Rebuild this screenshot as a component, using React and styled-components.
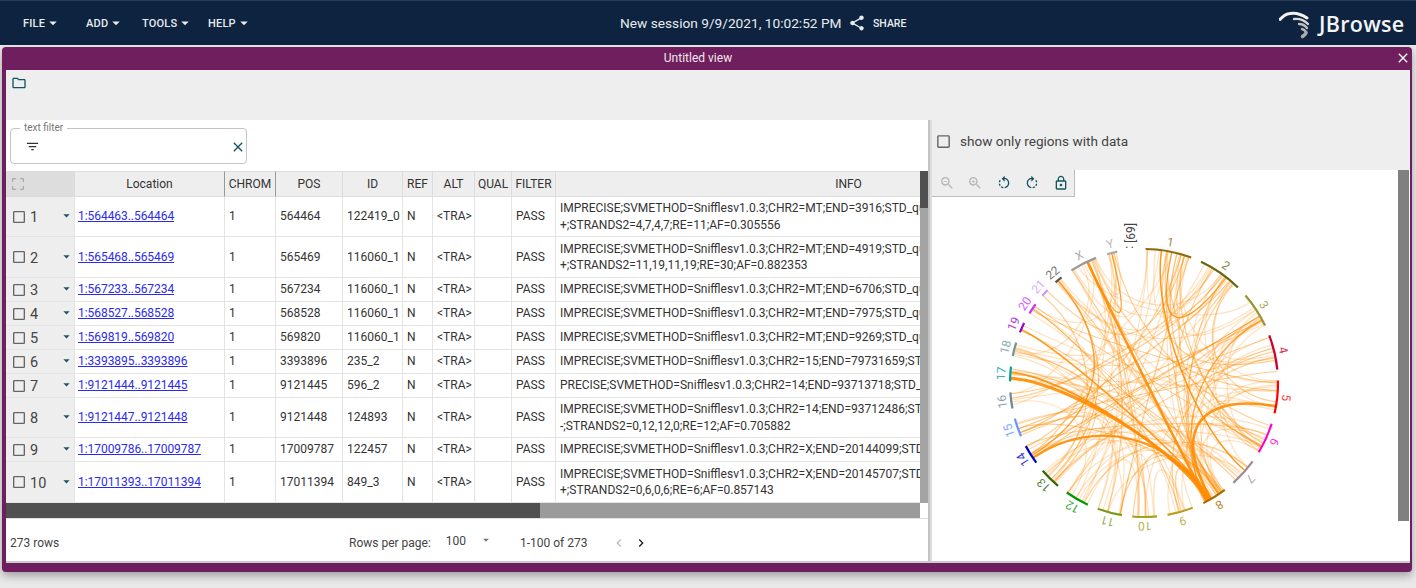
import styled, { createGlobalStyle } from 'styled-components'
import {
  MdArrowDropDown, MdCheckBoxOutlineBlank, MdChevronLeft, MdChevronRight, MdClear, MdClose,
  MdCropFree, MdFilterList, MdLockOutline, MdOutlineFolder, MdRotateLeft, MdRotateRight,
  MdShare, MdZoomIn, MdZoomOut,
} from 'react-icons/md'

const GlobalStyle = createGlobalStyle`
  html, body { margin: 0; padding: 0; background: #e9e9e9; }
  body { font-family: Roboto, "Liberation Sans", sans-serif; color: #333; overflow: hidden; }
`

const Page = styled.div`
  width: 1416px;
  height: 588px;
  overflow: hidden;
`

const TopBar = styled.header`
  height: 44px;
  border-top: 1px solid #2a3d58;
  background: #0d233f;
  color: #e8ebef;
  display: flex;
  align-items: center;
`

const Menu = styled.nav`
  width: 620px;
  padding-left: 23px;
  box-sizing: border-box;
  display: flex;
`

const MenuButton = styled.div`
  width: ${p => p.$w}px;
  display: flex;
  align-items: center;
  font-size: 11px;
  font-weight: 500;
  letter-spacing: 0.2px;
  svg { font-size: 18px; margin-left: -1px; }
`

const SessionName = styled.div`
  font-size: 13.7px;
  width: 228px;
  white-space: nowrap;
`

const ShareButton = styled.div`
  display: flex;
  align-items: center;
  gap: 7px;
  font-size: 10.5px;
  font-weight: 500;
  svg { font-size: 18px; }
`

const Logo = styled.div`
  margin-left: auto;
  width: 137px;
  display: flex;
  align-items: center;
  font-family: "Open Sans", sans-serif;
  font-size: 21.5px;
  font-weight: 600;
  letter-spacing: 0.3px;
  color: #f4f4f4;
`

const Panel = styled.section`
  margin: 2px 4px 0 2px;
  height: 525px;
  box-sizing: border-box;
  padding: 0 2px 9px 4px;
  background: #701f5e;
  border-radius: 4px;
  box-shadow: 0 4px 8px rgba(0, 0, 0, 0.3);
  display: flex;
  flex-direction: column;
`

const TitleBar = styled.div`
  height: 22px;
  flex: none;
  display: flex;
  align-items: center;
  justify-content: center;
  position: relative;
  color: #f0e6ee;
  font-size: 12px;
  padding-right: 16px;
  margin-left: -4px;
`

const CloseIcon = styled(MdClose)`
  position: absolute;
  right: -1px;
  top: 3px;
  font-size: 16px;
  color: #fff;
`

const ViewToolbar = styled.div`
  height: 50px;
  margin-top: 1px;
  flex: none;
  background: #eeeeee;
  padding: 5px;
  box-sizing: border-box;
  color: #135560;
  font-size: 16px;
`

const Split = styled.div`
  flex: 1;
  min-height: 0;
  display: flex;
  background: #fff;
  border-bottom: 2px solid #ccc;
`

const LeftColumn = styled.div`
  width: 922px;
  flex: none;
  display: flex;
  flex-direction: column;
`

const Divider = styled.div`
  width: 4px;
  flex: none;
  background: linear-gradient(to right, #c4c4c4 0, #c4c4c4 2px, #dddddd 2px);
`

const RightColumn = styled.div`
  flex: 1;
  display: flex;
  flex-direction: column;
`

const FilterBar = styled.div`
  height: 51px;
  flex: none;
  padding: 3px 0 0 4px;
  box-sizing: border-box;
`

const FilterBox = styled.fieldset`
  width: 237px;
  height: 41px;
  box-sizing: border-box;
  margin: 0;
  padding: 0 0 0 14px;
  border: 1px solid #c4c4c4;
  border-radius: 4px;
  display: flex;
  align-items: center;
  justify-content: space-between;
  legend {
    font-size: 10px;
    line-height: 10px;
    color: #777;
    padding: 0 4px;
    margin-left: -5px;
  }
  svg { font-size: 15px; color: #333; margin-top: -3px; }
  svg + svg { font-size: 16px; color: #135560; }
`

const TableRow = styled.div`
  display: flex;
  height: 332px;
  flex: none;
`

const TableClip = styled.div`
  width: 914px;
  overflow: hidden;
`

const Grid = styled.table`
  width: 1136px;
  table-layout: fixed;
  border-collapse: separate;
  border-spacing: 0;
  font-size: 12px;
  color: #333;
`

const HeadCell = styled.th`
  height: 26px;
  padding: 0;
  box-sizing: border-box;
  background: ${p => (p.$corner ? '#dddddd' : '#eeeeee')};
  border-right: ${p => (p.$strong ? '1.5px solid #999' : '1px solid #dcdcdc')};
  border-bottom: 1px solid #dcdcdc;
  border-top: 1px solid #dcdcdc;
  font-weight: 400;
  font-size: 12px;
  color: #333;
  text-align: center;
  overflow: hidden;
  white-space: nowrap;
  svg { display: block; margin-left: 4px; font-size: 16px; color: #aaa; }
`

const Cell = styled.td`
  height: ${p => p.$h}px;
  box-sizing: border-box;
  padding: 0 4px;
  border-right: 1px solid #e4e4e4;
  border-bottom: 1px solid #e4e4e4;
  white-space: nowrap;
  overflow: hidden;
  line-height: 16.5px;
`

const RowHead = styled(Cell)`
  background: #eeeeee;
  padding: 0;
`

const RowHeadInner = styled.div`
  display: flex;
  align-items: center;
  padding-left: 5px;
  color: #444;
  > svg:first-child { font-size: 16px; color: #666; margin-right: 3px; }
  > svg:last-child { margin-left: auto; margin-right: 0; font-size: 15px; color: #135560; margin-top: -2px; }
`

const RowNumber = styled.span`
  font-size: 14.5px;
  line-height: 16px;
  padding-top: 3px;
`

const LocLink = styled.a`
  margin-left: -1px;
  letter-spacing: -0.05px;
  color: #2b2bee;
  text-decoration: underline;
`

const VerticalScroll = styled.div`
  width: 8px;
  background: #a4a4a4;
`

const VerticalThumb = styled.div`
  height: 37px;
  background: #505050;
`

const HorizontalScroll = styled.div`
  height: 15px;
  flex: none;
  margin-right: 8px;
  background: linear-gradient(to right, #505050 0, #505050 534px, #9b9b9b 534px);
`

const Footer = styled.div`
  flex: 1;
  display: flex;
  align-items: center;
  font-size: 12px;
  color: #444;
  border-top: 1px solid #e0e0e0;
  padding: 6px 0 0 4px;
`

const RowCount = styled.span`
  width: 339px;
`

const PageSize = styled.span`
  display: flex;
  align-items: center;
  width: 171px;
  b { font-weight: 400; margin: -4px 13px 0 15px; }
  svg { font-size: 14px; color: #777; margin: -6px 0 0 0; }
`

const PageRange = styled.span`
  width: 91px;
`

const Pager = styled.span`
  display: flex;
  gap: 6px;
  font-size: 16px;
  svg:first-child { color: #bbb; }
  svg:last-child { color: #222; }
`

const RegionBar = styled.div`
  height: 50px;
  flex: none;
  background: #eeeeee;
  display: flex;
  align-items: center;
  padding: 0 0 8px 3px;
  box-sizing: border-box;
  font-size: 13.6px;
  color: #444;
  svg { font-size: 17px; color: #666; margin-right: 8px; }
`

const ChordArea = styled.div`
  flex: 1;
  min-height: 0;
  display: flex;
  position: relative;
`

const ChordCanvas = styled.div`
  width: 466px;
  overflow: hidden;
`

const ChordScroll = styled.div`
  width: 11px;
  height: 351px;
  background: #808080;
`

const ZoomBar = styled.div`
  position: absolute;
  left: 0;
  top: 0;
  width: 143px;
  height: 27px;
  box-sizing: border-box;
  background: #eeeeee;
  border-right: 1px solid #bdbdbd;
  border-bottom: 1px solid #bdbdbd;
  padding-left: 7px;
  display: flex;
  align-items: center;
  gap: 12.4px;
  font-size: 16px;
  color: #135560;
  svg.off { color: #b5b5b5; }
`

const rows = [
  { n: 1, loc: '1:564463..564464', pos: 564464, id: '122419_0', h: 40, info: 'IMPRECISE;SVMETHOD=Snifflesv1.0.3;CHR2=MT;END=3916;STD_quant_start=24', more: '+;STRANDS2=4,7,4,7;RE=11;AF=0.305556' },
  { n: 2, loc: '1:565468..565469', pos: 565469, id: '116060_1', h: 41, info: 'IMPRECISE;SVMETHOD=Snifflesv1.0.3;CHR2=MT;END=4919;STD_quant_start=18', more: '+;STRANDS2=11,19,11,19;RE=30;AF=0.882353' },
  { n: 3, loc: '1:567233..567234', pos: 567234, id: '116060_1', h: 24, info: 'IMPRECISE;SVMETHOD=Snifflesv1.0.3;CHR2=MT;END=6706;STD_quant_start=12' },
  { n: 4, loc: '1:568527..568528', pos: 568528, id: '116060_1', h: 24, info: 'IMPRECISE;SVMETHOD=Snifflesv1.0.3;CHR2=MT;END=7975;STD_quant_start=16' },
  { n: 5, loc: '1:569819..569820', pos: 569820, id: '116060_1', h: 24, info: 'IMPRECISE;SVMETHOD=Snifflesv1.0.3;CHR2=MT;END=9269;STD_quant_start=20' },
  { n: 6, loc: '1:3393895..3393896', pos: 3393896, id: '235_2', h: 24, info: 'IMPRECISE;SVMETHOD=Snifflesv1.0.3;CHR2=15;END=79731659;STD_quant_start=9' },
  { n: 7, loc: '1:9121444..9121445', pos: 9121445, id: '596_2', h: 24, info: 'PRECISE;SVMETHOD=Snifflesv1.0.3;CHR2=14;END=93713718;STD_quant_start=3' },
  { n: 8, loc: '1:9121447..9121448', pos: 9121448, id: '124893', h: 40, info: 'IMPRECISE;SVMETHOD=Snifflesv1.0.3;CHR2=14;END=93712486;STD_quant_start=7', more: '-;STRANDS2=0,12,12,0;RE=12;AF=0.705882' },
  { n: 9, loc: '1:17009786..17009787', pos: 17009787, id: '122457', h: 24, info: 'IMPRECISE;SVMETHOD=Snifflesv1.0.3;CHR2=X;END=20144099;STD_quant_start=5' },
  { n: 10, loc: '1:17011393..17011394', pos: 17011394, id: '849_3', h: 41, info: 'IMPRECISE;SVMETHOD=Snifflesv1.0.3;CHR2=X;END=20145707;STD_quant_start=6', more: '+;STRANDS2=0,6,0,6;RE=6;AF=0.857143' },
]

const columns = [
  { name: '', w: 69 }, { name: 'Location', w: 150, strong: true }, { name: 'CHROM', w: 51, strong: true },
  { name: 'POS', w: 67 }, { name: 'ID', w: 60 }, { name: 'REF', w: 30 }, { name: 'ALT', w: 42 },
  { name: 'QUAL', w: 37 }, { name: 'FILTER', w: 44 }, { name: 'INFO', w: 586 },
]

const chroms = [
  ['1', 0.7, 20.6, '#8f6a12'], ['2', 25.2, 44.5, '#666614'], ['3', 49.2, 64.6, '#94962e'],
  ['4', 69.2, 84.3, '#cc0033'], ['5', 88.9, 103, '#ff0000'], ['6', 107.7, 121.1, '#ff00cc'],
  ['7', 125.8, 138.2, '#9c8a9c'], ['8', 142.9, 153.7, '#a86c00'], ['9', 158.7, 169.9, '#b8a020'],
  ['10', 174.4, 185, '#a3a31a'], ['11', 189.5, 200.2, '#7c9a1a'], ['12', 204.8, 215.2, '#009900'],
  ['13', 219.9, 229.1, '#336600'], ['14', 233.5, 241.9, '#0000cc'], ['15', 246.6, 254.6, '#6699ff'],
  ['16', 259, 266, '#6a8aa0'], ['17', 270.7, 277, '#00a0a0'], ['18', 281.6, 287.5, '#669999'],
  ['19', 292.2, 296.6, '#9900cc'], ['20', 301.3, 306, '#cc33ff'], ['21', 310.6, 314, '#cc99ff'],
  ['22', 318.7, 322, '#555555'], ['X', 327.2, 339, '#999999'], ['Y', 344, 348.5, '#aaaaaa'],
]

const CX = 212
const CY = 213
const R = 134

const polar = (deg, r) => {
  const a = (deg * Math.PI) / 180
  return [CX + r * Math.sin(a), CY - r * Math.cos(a)]
}

const arcPath = (from, to, r) => {
  const [x0, y0] = polar(from, r)
  const [x1, y1] = polar(to, r)
  return `M${x0} ${y0}A${r} ${r} 0 0 1 ${x1} ${y1}`
}

const chordPath = (a, b, k = 0.45) => {
  const [x0, y0] = polar(a, R - 1)
  const [x1, y1] = polar(b, R - 1)
  const [c0x, c0y] = polar(a, (R - 1) * k)
  const [c1x, c1y] = polar(b, (R - 1) * k)
  return `M${x0} ${y0}C${c0x} ${c0y} ${c1x} ${c1y} ${x1} ${y1}`
}

// the strong links, read off the picture: from, to, width, opacity, pull
const strongChords = [
  [335, 152, 2.6, 0.9, 0.6], [272, 151, 3, 0.9, 0.6], [274.5, 152, 2, 0.9, 0.6], [293.5, 150, 1.6, 0.85, 0.7],
  [236, 151, 2.2, 0.9, 0.45], [100, 150, 2.6, 0.9, 0.42], [7.5, 131, 1.5, 0.9, 0.5], [62, 152, 1.4, 0.75, 0.45],
  [320, 237, 1.3, 0.8, 0.35], [346, 335, 1.4, 0.85, 0.42], [12, 38, 1.2, 0.85, 0.42], [238, 60, 1, 0.6, 0.6],
  [224, 320, 1, 0.55, 0.35], [150, 10, 1, 0.5, 0.6], [250, 149, 1, 0.5, 0.6], [304, 146, 1, 0.5, 0.7],
  [248, 40, 1.1, 0.5, 0.6], [250, 62, 1.1, 0.5, 0.6], [252, 85, 1, 0.45, 0.6], [247, 70, 1, 0.45, 0.6],
  [303, 90, 1, 0.45, 0.7], [305, 118, 1, 0.45, 0.7], [60, 236, 1, 0.5, 0.55], [75, 240, 1, 0.4, 0.6],
]

const seeded = seed => () => {
  seed = (seed + 0x6d2b79f5) | 0
  let t = Math.imul(seed ^ (seed >>> 15), 1 | seed)
  t = (t + Math.imul(t ^ (t >>> 7), 61 | t)) ^ t
  return ((t ^ (t >>> 14)) >>> 0) / 4294967296
}

const paleChords = (() => {
  const rand = seeded(69)
  const total = chroms.reduce((sum, c) => sum + c[2] - c[1], 0)
  // a point on the ring, so long chromosomes get more links
  const pick = () => {
    if (rand() < 0.1) return 143 + rand() * 10
    let left = rand() * total
    for (const c of chroms) {
      const len = c[2] - c[1]
      if (left < len) return c[1] + left
      left -= len
    }
    return 0
  }
  const out = []
  while (out.length < 130) {
    const a = pick()
    const b = pick()
    if (Math.abs(a - b) > 8) {
      out.push({ a, b, k: 0.25 + rand() * 0.4, o: rand() < 0.25 ? 0.42 : 0.25 })
    }
  }
  return out
})()

const ChordDiagram = () => (
  <svg width="466" height="391" viewBox="0 0 466 391">
    <g fill="none" stroke="#ff8c00" strokeLinecap="round">
      {paleChords.map(({ a, b, k, o }, i) => (
        <path key={i} d={chordPath(a, b, k)} strokeWidth="1.2" opacity={o} />
      ))}
      {strongChords.map(([a, b, w, o, k], i) => (
        <path key={i} d={chordPath(a, b, k)} strokeWidth={w} opacity={o} />
      ))}
    </g>
    {chroms.map(([name, from, to, color]) => {
      const mid = (from + to) / 2
      const [x, y] = polar(mid, R + 9)
      return (
        <g key={name}>
          <path d={arcPath(from, to, R)} fill="none" stroke={color} strokeWidth="2.2" />
          <text
            x={x}
            y={y}
            fill={color}
            opacity="0.8"
            fontSize="12"
            textAnchor="middle"
            dominantBaseline="central"
            transform={`rotate(${mid} ${x} ${y})`}
          >
            {name}
          </text>
        </g>
      )
    })}
    <text x="198" y="53" fontSize="12" fill="#444" transform="rotate(90 198 53)" dominantBaseline="central">
      [69] :
    </text>
  </svg>
)

const JBrowseMark = () => (
  <svg width="40" height="44" viewBox="9 0 40 44" fill="none" strokeLinecap="round">
    <path d="M10 18.5Q15 13 20 12.5Q28 11 37 17" stroke="#f2f2f2" strokeWidth="3" />
    <path d="M24 18Q32 17 38 23" stroke="#d8d8d8" strokeWidth="2.4" />
    <path d="M29 23Q34 23 37 27" stroke="#bdbdbd" strokeWidth="2.4" />
    <path d="M32 28Q35 29 36 31" stroke="#b5b5b5" strokeWidth="2.4" />
    <path d="M32.5 35.5Q36 33 36 31.5" stroke="#aaaaaa" strokeWidth="3.6" />
  </svg>
)

const App = () => (
  <Page>
    <GlobalStyle />
    <TopBar>
      <Menu>
        <MenuButton $w={63}>FILE<MdArrowDropDown /></MenuButton>
        <MenuButton $w={56}>ADD<MdArrowDropDown /></MenuButton>
        <MenuButton $w={66}>TOOLS<MdArrowDropDown /></MenuButton>
        <MenuButton $w={50}>HELP<MdArrowDropDown /></MenuButton>
      </Menu>
      <SessionName>New session 9/9/2021, 10:02:52 PM</SessionName>
      <ShareButton><MdShare />SHARE</ShareButton>
      <Logo><JBrowseMark />JBrowse</Logo>
    </TopBar>
    <Panel>
      <TitleBar>
        Untitled view
        <CloseIcon />
      </TitleBar>
      <ViewToolbar><MdOutlineFolder /></ViewToolbar>
      <Split>
        <LeftColumn>
          <FilterBar>
            <FilterBox>
              <legend>text filter</legend>
              <MdFilterList />
              <MdClear />
            </FilterBox>
          </FilterBar>
          <TableRow>
            <TableClip>
              <Grid>
                <colgroup>
                  {columns.map((c, i) => <col key={i} style={{ width: c.w }} />)}
                </colgroup>
                <thead>
                  <tr>
                    {columns.map((c, i) => (
                      <HeadCell key={i} $corner={i === 0} $strong={c.strong}>
                        {i === 0 ? <MdCropFree /> : c.name}
                      </HeadCell>
                    ))}
                  </tr>
                </thead>
                <tbody>
                  {rows.map(r => (
                    <tr key={r.n}>
                      <RowHead $h={r.h}>
                        <RowHeadInner>
                          <MdCheckBoxOutlineBlank />
                          <RowNumber>{r.n}</RowNumber>
                          <MdArrowDropDown />
                        </RowHeadInner>
                      </RowHead>
                      <Cell $h={r.h}><LocLink href="#">{r.loc}</LocLink></Cell>
                      <Cell $h={r.h}>1</Cell>
                      <Cell $h={r.h}>{r.pos}</Cell>
                      <Cell $h={r.h}>{r.id}</Cell>
                      <Cell $h={r.h}>N</Cell>
                      <Cell $h={r.h}>&lt;TRA&gt;</Cell>
                      <Cell $h={r.h}></Cell>
                      <Cell $h={r.h}>PASS</Cell>
                      <Cell $h={r.h}>
                        {r.info}
                        {r.more && <br />}
                        {r.more}
                      </Cell>
                    </tr>
                  ))}
                </tbody>
              </Grid>
            </TableClip>
            <VerticalScroll><VerticalThumb /></VerticalScroll>
          </TableRow>
          <HorizontalScroll />
          <Footer>
            <RowCount>273 rows</RowCount>
            <PageSize>Rows per page:<b>100</b><MdArrowDropDown /></PageSize>
            <PageRange>1-100 of 273</PageRange>
            <Pager><MdChevronLeft /><MdChevronRight /></Pager>
          </Footer>
        </LeftColumn>
        <Divider />
        <RightColumn>
          <RegionBar><MdCheckBoxOutlineBlank />show only regions with data</RegionBar>
          <ChordArea>
            <ChordCanvas><ChordDiagram /></ChordCanvas>
            <ChordScroll />
            <ZoomBar>
              <MdZoomOut className="off" />
              <MdZoomIn className="off" />
              <MdRotateLeft />
              <MdRotateRight />
              <MdLockOutline />
            </ZoomBar>
          </ChordArea>
        </RightColumn>
      </Split>
    </Panel>
  </Page>
)

export default App
